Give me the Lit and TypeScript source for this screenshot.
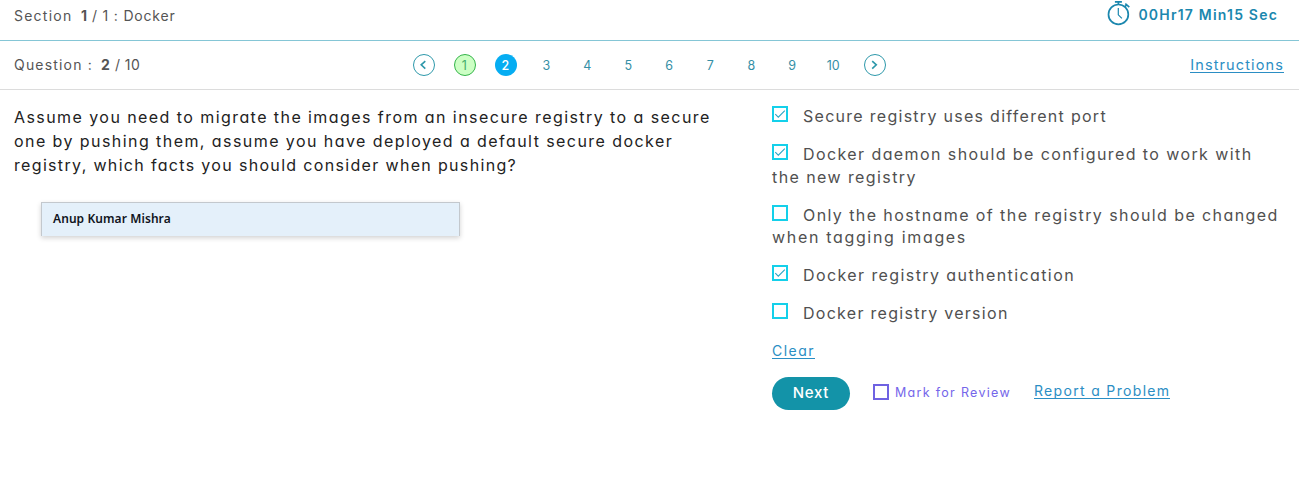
import { LitElement, html, css, svg } from "lit";
import { customElement, property } from "lit/decorators.js";

@customElement("check-box")
class CheckBox extends LitElement {
  @property({ type: Boolean }) checked = false;
  static styles = css`
    :host { display: inline-block; width: 16px; height: 16px; color: #14d0ea; }
    svg { display: block; }
  `;
  render() {
    return html`<svg width="16" height="16" viewBox="0 0 16 16" fill="none" stroke="currentColor">
      <rect x="1" y="1" width="14" height="14" stroke-width="2" />
      ${this.checked ? svg`<path d="M3.3 8.2 6.3 11.2 12.8 4.7" stroke="#2ba5c4" stroke-width="1.1" />` : ""}
    </svg>`;
  }
}

@customElement("app-root")
class AppRoot extends LitElement {
  static styles = css`
    :host {
      display: block; height: 482px; overflow: hidden; background: #fff; color: #555;
      font-family: Inter, "Open Sans", sans-serif; font-feature-settings: "cv11", "calt" 0; font-size: 14px;
    }
    * { box-sizing: border-box; }
    a { color: #2b8ec4; text-decoration: none; border-bottom: 1px solid #2b8ec4; white-space: nowrap; }
    .bar { display: flex; align-items: flex-start; justify-content: space-between; padding: 0 15px 0 14px; white-space: nowrap; }
    .top { height: 41px; border-bottom: 1px solid #85c6d6; }
    .nav { height: 49px; border-bottom: 1px solid #dcdcdc; }
    .label { display: flex; line-height: 20px; }
    .top .label { padding-top: 6px; }
    .nav .label { padding-top: 14px; width: 399px; }
    .label b { font-weight: 700; }
    .s1 { width: 67px; letter-spacing: 1.24px; }
    .s2 { width: 11px; }
    .s3 { letter-spacing: .8px; }
    .q1 { width: 87px; letter-spacing: 1.18px; }
    .q2 { width: 14px; }
    .q3 { letter-spacing: .4px; }
    .timer { display: flex; padding: 1px 6px 0 0; color: #1b87ae; font-weight: 600; gap: 7px; }
    .time { line-height: 20px; padding-top: 4px; letter-spacing: 1.2px; }
    .pages { display: flex; flex: 1; padding-top: 13px; gap: 19px; }
    .page { width: 22px; height: 22px; border-radius: 50%; text-align: center; text-indent: -1.5px; font-size: 12.5px; line-height: 24px; color: #358fa6; }
    .done { border: 1px solid #35b54a; background: #ccffc4; line-height: 22px; color: #42ae6a; }
    .now { background: #06adf2; color: #fff; font-weight: 500; }
    .inst { margin-top: 16px; line-height: 15px; font-size: 14.5px; letter-spacing: 1.12px; }
    .main { display: grid; grid-template-columns: 758px 1fr; padding-left: 14px; }
    .question { padding-top: 15px; font-size: 16px; line-height: 24px; color: #222; letter-spacing: 1.43px; }
    .line { display: block; white-space: nowrap; }
    .question .last { letter-spacing: 1.33px; }
    .name { margin: 25px 0 0 27px; width: 419px; height: 34px; padding-left: 11px; border: 1px solid #c3c8cd; border-bottom: 0;
      background: #e4f0fa; box-shadow: 0 2px 5px rgba(0,0,0,.18); font: 600 12px/31px "Noto Sans", sans-serif; letter-spacing: .08px; color: #10141c; }
    .answers { padding-top: 15px; font-size: 16px; line-height: 22.5px; color: #505050; }
    .option { margin-bottom: 15.5px; letter-spacing: 1.41px; }
    .option check-box { margin-right: 15px; vertical-align: 0; }
    .tight { letter-spacing: 1.28px; }
    .loose { letter-spacing: 1.67px; }
    .clear { display: block; width: fit-content; margin-top: 19.5px; line-height: 14px; font-size: 14px; letter-spacing: 1.48px; }
    .actions { display: flex; padding-top: 18px; }
    .next { width: 78px; height: 33px; border: 0; border-radius: 17px; background: #1393a8; color: #fff; font: inherit; font-size: 15px; font-weight: 500; letter-spacing: .7px; padding: 0; }
    .mark { display: flex; margin: 7px 0 0 23px; color: #7566ea; font-size: 12.5px; line-height: 18px; gap: 6px; letter-spacing: 1.3px; }
    .mark check-box { color: #6f62e2; }
    .report { margin: 7px 0 0 23px; height: 15px; line-height: 14px; font-size: 14px; letter-spacing: 1.33px; }
  `;

  render() {
    return html`
      <div class="bar top">
        <div class="label"><span class="s1">Section</span><b class="s2">1</b><span class="s3">/ 1 : Docker</span></div>
        <div class="timer">
          <svg width="24" height="26" viewBox="0 0 24 26" fill="none" stroke="currentColor" stroke-width="1.7">
            <circle cx="11.4" cy="13.4" r="9.9" /><path d="M11.4 3.5V1M7.9 .8h7M17.7 5.8l2.3-2.3M18.3 2.7l4 3.4" /><path d="M11.3 7v6.8l3.6 3.6" stroke-width="1.2" />
          </svg>
          <span class="time">00Hr17 Min15 Sec</span>
        </div>
      </div>
      <div class="bar nav">
        <div class="label"><span class="q1">Question :</span><b class="q2">2</b><span class="q3">/ 10</span></div>
        <div class="pages">
          <svg width="22" height="22" fill="none" stroke="#2d98aa"><circle cx="11" cy="11" r="10.5" /><path d="M12.3 7.2 8.2 10.8l4.1 3.8" stroke-width="1.6" /></svg>
          ${[1, 2, 3, 4, 5, 6, 7, 8, 9, 10].map((n) => html`<span class="page ${n === 1 ? "done" : n === 2 ? "now" : ""}">${n}</span>`)}
          <svg width="22" height="22" fill="none" stroke="#2d98aa"><circle cx="11" cy="11" r="10.5" /><path d="M8.2 7.2 12.3 10.8l-4.1 3.8" stroke-width="1.6" /></svg>
        </div>
        <a class="inst">Instructions</a>
      </div>
      <div class="main">
        <div>
          <div class="question">
            <span class="line">Assume you need to migrate the images from an insecure registry to a secure</span>
            <span class="line">one by pushing them, assume you have deployed a default secure docker</span>
            <span class="line last">registry, which facts you should consider when pushing?</span>
          </div>
          <div class="name">Anup Kumar Mishra</div>
        </div>
        <div class="answers">
          <div class="option"><span class="line tight"><check-box checked></check-box>Secure registry uses different port</span></div>
          <div class="option"><span class="line"><check-box checked></check-box>Docker daemon should be configured to work with</span><span class="line">the new registry</span></div>
          <div class="option"><span class="line"><check-box></check-box>Only the hostname of the registry should be changed</span><span class="line loose">when tagging images</span></div>
          <div class="option"><span class="line"><check-box checked></check-box>Docker registry authentication</span></div>
          <div class="option"><span class="line tight"><check-box></check-box>Docker registry version</span></div>
          <a class="clear">Clear</a>
          <div class="actions">
            <button class="next">Next</button>
            <div class="mark"><check-box></check-box><span>Mark for Review</span></div>
            <a class="report">Report a Problem</a>
          </div>
        </div>
      </div>
    `;
  }
}
